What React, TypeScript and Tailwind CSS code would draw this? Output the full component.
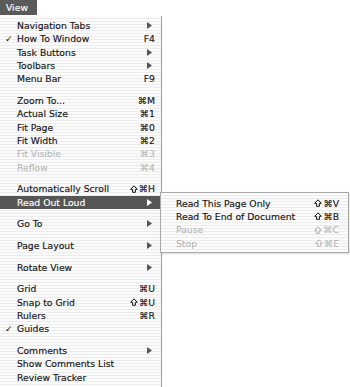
import React from "react";

type Item =
  | { sep: true }
  | {
      sep?: false;
      label: string;
      keys?: string;
      sub?: boolean;
      check?: boolean;
      off?: boolean;
      hot?: boolean;
    };

const viewMenu: Item[] = [
  { label: "Navigation Tabs", sub: true },
  { label: "How To Window", keys: "F4", check: true },
  { label: "Task Buttons", sub: true },
  { label: "Toolbars", sub: true },
  { label: "Menu Bar", keys: "F9" },
  { sep: true },
  { label: "Zoom To...", keys: "⌘M" },
  { label: "Actual Size", keys: "⌘1" },
  { label: "Fit Page", keys: "⌘0" },
  { label: "Fit Width", keys: "⌘2" },
  { label: "Fit Visible", keys: "⌘3", off: true },
  { label: "Reflow", keys: "⌘4", off: true },
  { sep: true },
  { label: "Automatically Scroll", keys: "⇧⌘H" },
  { label: "Read Out Loud", sub: true, hot: true },
  { sep: true },
  { label: "Go To", sub: true },
  { sep: true },
  { label: "Page Layout", sub: true },
  { sep: true },
  { label: "Rotate View", sub: true },
  { sep: true },
  { label: "Grid", keys: "⌘U" },
  { label: "Snap to Grid", keys: "⇧⌘U" },
  { label: "Rulers", keys: "⌘R" },
  { label: "Guides", check: true },
  { sep: true },
  { label: "Comments", sub: true },
  { label: "Show Comments List" },
  { label: "Review Tracker" },
];

const readMenu: Item[] = [
  { label: "Read This Page Only", keys: "⇧⌘V" },
  { label: "Read To End of Document", keys: "⇧⌘B" },
  { label: "Pause", keys: "⇧⌘C", off: true },
  { label: "Stop", keys: "⇧⌘E", off: true },
];

const stripes =
  "bg-[repeating-linear-gradient(180deg,#fbfbfb_0px,#fbfbfb_2px,#ececec_2px,#ececec_3px)]";

const Arrow = ({ hot }: { hot?: boolean }) => (
  <svg width="5" height="7" viewBox="0 0 5 7" className="mr-[3px]">
    <path d="M0 0 L5 3.5 L0 7 Z" fill={hot ? "#ffffff" : "#555555"} />
  </svg>
);

// shift key drawn as an outlined arrow, the font's glyph is too thin
const Shift = () => (
  <svg width="8" height="8" viewBox="0 0 8 8" className="mr-[1px]">
    <path
      d="M4 0.8 L7.3 4.3 H5.4 V7.3 H2.6 V4.3 H0.7 Z"
      fill="none"
      stroke="currentColor"
      strokeWidth="1"
      strokeLinejoin="round"
    />
  </svg>
);

const Keys = ({ keys }: { keys?: string }) => {
  if (!keys) return null;
  const shift = keys.startsWith("⇧");
  return (
    <span className="flex items-center leading-none">
      {shift && <Shift />}
      <span>{shift ? keys.slice(1) : keys}</span>
    </span>
  );
};

const MenuRows = ({ items, left }: { items: Item[]; left: number }) => (
  <>
    {items.map((it, i) => {
      if (it.sep) return <div key={i} className="h-[8.33px]" />;
      const color = it.hot
        ? "text-white [-webkit-text-stroke:0.15px_#ffffff]"
        : it.off
        ? "text-[#b0b0b0]"
        : "text-[#151515] [-webkit-text-stroke:0.15px_#151515]";
      return (
        <div
          key={i}
          className={`relative flex items-center justify-between h-[13.33px] pr-[6px] ${
            it.hot ? "bg-[#565656]" : ""
          } ${color}`}
          style={{ paddingLeft: left }}
        >
          {it.check && (
            <span className="absolute left-[5px] top-0 leading-[13.33px] [-webkit-text-stroke:0px]">✓</span>
          )}
          <span className="leading-none whitespace-nowrap">{it.label}</span>
          {it.sub ? <Arrow hot={it.hot} /> : <Keys keys={it.keys} />}
        </div>
      );
    })}
  </>
);

export default function App() {
  return (
    <div className="relative w-[350px] h-[387px] overflow-hidden bg-white text-[9.25px] font-['DejaVu_Sans',sans-serif]">
      <div className="h-[16px] flex">
        <div className="w-[37px] h-[15px] bg-[#5a5a5a] text-white flex items-center pl-[6px] [-webkit-text-stroke:0.15px_#ffffff]">
          View
        </div>
      </div>

      <div className={`w-[162px] h-[371px] pt-[3px] border-r border-[#9c9c9c] ${stripes}`}>
        <MenuRows items={viewMenu} left={17} />
      </div>

      <div
        className={`absolute left-[160px] top-[192px] w-[189px] h-[61px] pt-[3.5px] pr-[3px] border border-[#a8a8a8] shadow-[1px_1px_2px_rgba(0,0,0,0.15)] ${stripes}`}
      >
        <MenuRows items={readMenu} left={15} />
      </div>
    </div>
  );
}
